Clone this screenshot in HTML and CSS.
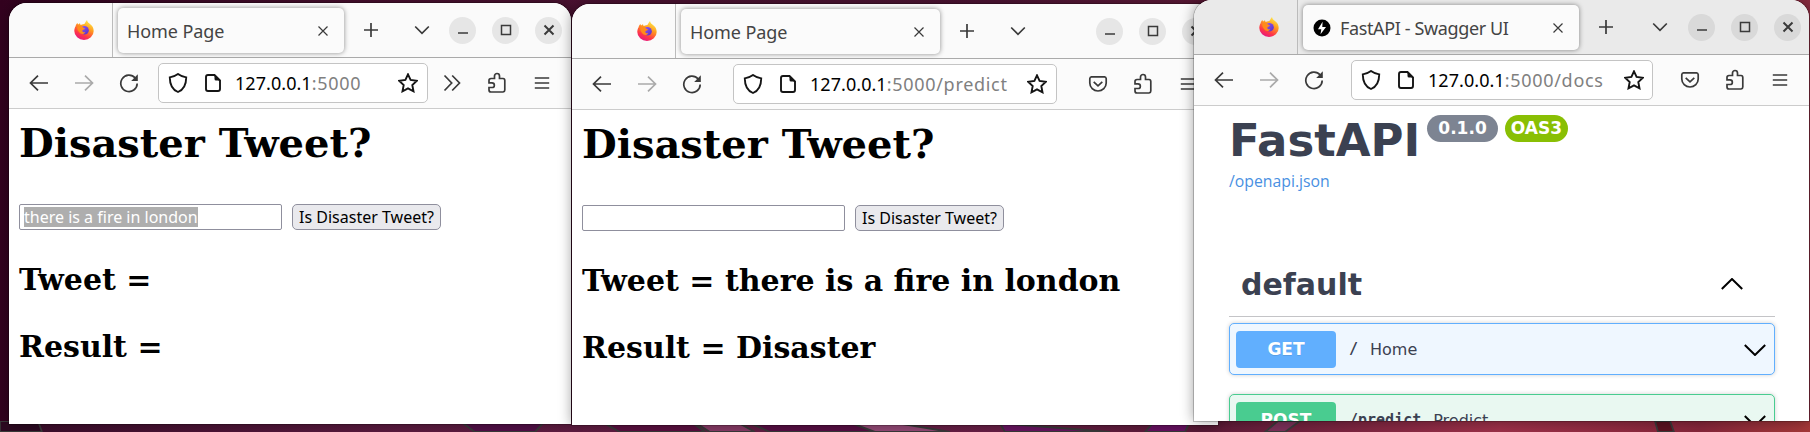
FILE: index.html
```html
<!DOCTYPE html>
<html lang="en">
<head>
<meta charset="utf-8">
<title>Desktop</title>
<link rel="stylesheet" href="styles.css">
</head>
<body>
<svg class="defs" width="0" height="0">
<defs>
<linearGradient id="fx1" x1=".8" y1="0" x2=".3" y2="1"><stop offset="0" stop-color="#fff44f"/><stop offset=".4" stop-color="#ff9a1f"/><stop offset=".75" stop-color="#ff3647"/><stop offset="1" stop-color="#e31587"/></linearGradient>
<linearGradient id="fx2" x1="0" y1="0" x2="1" y2="1"><stop offset="0" stop-color="#9059ff"/><stop offset="1" stop-color="#5b2fc0"/></linearGradient>
</defs>
<symbol id="firefox" viewBox="0 0 20 20"><path fill="url(#fx1)" d="M1.6 6.2C2 4.4 2.7 3.600 3.500 3C3.600 3.800 3.800 4.200 4.200 4.600C4.800 3.900 5.400 3.500 6 3.300C6 4 6.300 4.500 6.800 4.900C8.500 4.700 10 4.300 10.800 3.600C11.300 2.300 12 1.300 13 0C13.400 2.200 14.700 3 16 4C18.500 5.800 19.700 8 19.700 11A9.700 9 0 0 1 10 20A9.700 9 0 0 1 .3 11C.3 9 .8 7.500 1.600 6.200Z"/><circle cx="10.500" cy="10.200" r="4.300" fill="url(#fx2)"/><path fill="#ff8b1a" d="M3.200 6.500C5.500 5.500 8 6.200 9.400 7.700C10.400 8 11 8.200 11 8.800C10.500 9.700 8.900 9.600 8.300 10.400C8.200 12 9.600 12.500 11.300 12.200C10 14.500 7 14.500 5.500 12.500C4 11 3 9 3.200 6.500Z"/></symbol>
<symbol id="close" viewBox="0 0 12 12"><path d="M1.500 1.500L10.500 10.500M10.500 1.500L1.500 10.500"/></symbol>
<symbol id="plus" viewBox="0 0 16 16"><path d="M8 1V15M1 8H15"/></symbol>
<symbol id="down" viewBox="0 0 16 10"><path d="M1.200 1.500L8 8.300L14.800 1.500"/></symbol>
<symbol id="min" viewBox="0 0 12 12"><path d="M1 9H11"/></symbol>
<symbol id="max" viewBox="0 0 12 12"><path d="M1.500 1.500H10.500V10.500H1.500Z"/></symbol>
<symbol id="back" viewBox="0 0 20 20"><path d="M19 10H1.500M9 2.700L1.500 10L9 17.300"/></symbol>
<symbol id="fwd" viewBox="0 0 20 20"><path d="M1 10H18.500M11 2.700L18.500 10L11 17.300"/></symbol>
<symbol id="reload" viewBox="0 0 20 20"><path d="M18.200 10.500A8.200 8.200 0 1 1 16.200 5"/><path fill="currentColor" stroke="none" d="M18.800 1.300V8H12.200Z"/></symbol>
<symbol id="shield" viewBox="0 0 20 20"><path d="M10 1C12.500 2.800 15 3.900 18.200 4.400C18.200 11.500 16.500 16.200 10 19C3.500 16.200 1.800 11.500 1.800 4.400C5 3.900 7.500 2.800 10 1Z"/></symbol>
<symbol id="doc" viewBox="0 0 18 20"><path d="M4 2H10.500L16 7.500V16A2 2 0 0 1 14 18H4A2 2 0 0 1 2 16V4A2 2 0 0 1 4 2Z"/><path fill="currentColor" stroke="none" d="M10.500 1.500L16.500 7.500H12A1.500 1.500 0 0 1 10.500 6Z"/></symbol>
<symbol id="star" viewBox="0 0 20 20"><path d="M10 1.300L12.600 6.900L18.900 7.700L14.300 12L15.500 18.300L10 15.300L4.500 18.300L5.700 12L1.100 7.700L7.400 6.900Z"/></symbol>
<symbol id="more" viewBox="0 0 18 18"><path d="M1.500 1.500L8.700 9L1.500 16.500M9.200 1.500L16.500 9L9.200 16.500"/></symbol>
<symbol id="pocket" viewBox="0 0 20 20"><path d="M3.500 2.800H16.500A2 2 0 0 1 18.200 4.500V9A8.200 8 0 0 1 1.800 9V4.500A2 2 0 0 1 3.500 2.800Z"/><path d="M5.700 7.800L10 11.800L14.300 7.800"/></symbol>
<symbol id="puzzle" viewBox="0 0 20 22"><path d="M4 6.500H7.500V4A2.500 2.500 0 0 1 12.500 4V6.500H16A2 2 0 0 1 17.800 8.500V18A2 2 0 0 1 16 20H4A2 2 0 0 1 2 18V15.500H5A2 2 0 0 0 5 10.800H2V8.500A2 2 0 0 1 4 6.500Z"/></symbol>
<symbol id="menu" viewBox="0 0 16 14"><path d="M.8 2H15.200M.8 7H15.200M.8 12H15.200"/></symbol>
<symbol id="bolt" viewBox="0 0 18 18"><circle cx="9" cy="9" r="8.500" fill="#000" stroke="none"/><path fill="#fff" stroke="none" d="M9.600 2.800L5 10.200H8.300L7.500 15.200L13 7.900H9.300Z"/></symbol>
<symbol id="arrow" viewBox="0 0 22 12"><path d="M.8 1L11 11L21.200 1"/></symbol>
</svg>

<svg class="wallpaper" viewBox="0 0 1810 10" preserveAspectRatio="none">
<path fill="#2d0a22" d="M0 0H38L42 10H0Z"/>
<path fill="#521047" d="M460 0H545L535 10H475Z"/>
<path fill="#5c1040" d="M600 0H690L705 10H620Z"/><path fill="#8a3c68" d="M693 0H735L755 10H710Z"/><path fill="#590f45" d="M745 0H850L880 10H770Z"/><path fill="#974b78" d="M846 0H885L950 10H875Z"/><path fill="#6a1562" d="M1000 2L1110 10H1005Z"/><path fill="#691162" d="M1155 0H1190L1185 10H1145Z"/><path fill="#7a3058" d="M1278 0H1300L1285 10H1265Z"/><path fill="#5a1220" d="M1655 0H1670L1674 10H1658Z"/>
</svg>

<section class="window one">
<header class="tabs"><svg class="fx"><use href="#firefox"/></svg><div class="tab"><span class="title">Home Page</span><svg class="i12 end"><use href="#close"/></svg></div><svg class="i16 plus"><use href="#plus"/></svg><svg class="chev"><use href="#down"/></svg><div class="controls"><span><svg class="i12"><use href="#min"/></svg></span><span><svg class="i12"><use href="#max"/></svg></span><span><svg class="i12 x"><use href="#close"/></svg></span></div></header>
<nav class="toolbar"><span class="cell"><svg><use href="#back"/></svg></span><span class="cell dim"><svg><use href="#fwd"/></svg></span><span class="cell"><svg><use href="#reload"/></svg></span><div class="url"><svg><use href="#shield"/></svg><svg class="doc"><use href="#doc"/></svg><span class="addr"><b>127.0.0.1</b>:5000</span><svg class="end"><use href="#star"/></svg></div><div class="tools"><span class="cell"><svg class="more"><use href="#more"/></svg></span><span class="cell"><svg class="puzzle"><use href="#puzzle"/></svg></span><span class="cell"><svg class="menu"><use href="#menu"/></svg></span></div></nav>
<main class="page"><h1>Disaster Tweet?</h1><div class="form"><div class="input"><span class="selected">there is a fire in london</span></div><button>Is Disaster Tweet?</button></div><h2>Tweet =</h2><h2>Result =</h2></main>
</section>

<section class="window two">
<header class="tabs"><svg class="fx"><use href="#firefox"/></svg><div class="tab"><span class="title">Home Page</span><svg class="i12 end"><use href="#close"/></svg></div><svg class="i16 plus"><use href="#plus"/></svg><svg class="chev"><use href="#down"/></svg><div class="controls"><span><svg class="i12"><use href="#min"/></svg></span><span><svg class="i12"><use href="#max"/></svg></span><span><svg class="i12 x"><use href="#close"/></svg></span></div></header>
<nav class="toolbar"><span class="cell"><svg><use href="#back"/></svg></span><span class="cell dim"><svg><use href="#fwd"/></svg></span><span class="cell"><svg><use href="#reload"/></svg></span><div class="url"><svg><use href="#shield"/></svg><svg class="doc"><use href="#doc"/></svg><span class="addr"><b>127.0.0.1</b>:5000/predict</span><svg class="end"><use href="#star"/></svg></div><div class="tools"><span class="cell"><svg><use href="#pocket"/></svg></span><span class="cell"><svg class="puzzle"><use href="#puzzle"/></svg></span><span class="cell"><svg class="menu"><use href="#menu"/></svg></span></div></nav>
<main class="page"><h1>Disaster Tweet?</h1><div class="form"><div class="input"></div><button>Is Disaster Tweet?</button></div><h2>Tweet = there is a fire in london</h2><h2>Result = Disaster</h2></main>
</section>

<section class="window three">
<header class="tabs"><svg class="fx"><use href="#firefox"/></svg><div class="tab"><svg class="favicon"><use href="#bolt"/></svg><span class="title">FastAPI - Swagger UI</span><svg class="i12 end"><use href="#close"/></svg></div><svg class="i16 plus"><use href="#plus"/></svg><svg class="chev"><use href="#down"/></svg><div class="controls"><span><svg class="i12"><use href="#min"/></svg></span><span><svg class="i12"><use href="#max"/></svg></span><span><svg class="i12 x"><use href="#close"/></svg></span></div></header>
<nav class="toolbar"><span class="cell"><svg><use href="#back"/></svg></span><span class="cell dim"><svg><use href="#fwd"/></svg></span><span class="cell"><svg><use href="#reload"/></svg></span><div class="url"><svg><use href="#shield"/></svg><svg class="doc"><use href="#doc"/></svg><span class="addr"><b>127.0.0.1</b>:5000/docs</span><svg class="end"><use href="#star"/></svg></div><div class="tools"><span class="cell"><svg><use href="#pocket"/></svg></span><span class="cell"><svg class="puzzle"><use href="#puzzle"/></svg></span><span class="cell"><svg class="menu"><use href="#menu"/></svg></span></div></nav>
<main class="swagger">
<div class="brand"><span class="name">FastAPI</span><span class="badge">0.1.0</span><span class="badge oas">OAS3</span></div>
<div class="spec">/openapi.json</div>
<div class="group"><span>default</span><svg class="arrow up"><use href="#arrow"/></svg></div>
<div class="op get"><span class="method">GET</span><span class="path">/</span><span class="desc">Home</span><svg class="arrow"><use href="#arrow"/></svg></div>
<div class="op post"><span class="method">POST</span><span class="path">/predict</span><span class="desc">Predict</span><svg class="arrow"><use href="#arrow"/></svg></div>
</main>
</section>
</body>
</html>
```

FILE: styles.css
```css
* { box-sizing: border-box; }
body { margin: 0; width: 1810px; height: 432px; overflow: hidden; position: relative; background: linear-gradient(90deg, #33021f 0, #4a1030 350px, #4e1434 1000px, #7b2440 1500px, #8a2c40 1810px); font-family: "Noto Sans", sans-serif; }
.defs { position: absolute; }
.wallpaper { position: absolute; left: 0; bottom: 0; width: 1810px; height: 11px; background: linear-gradient(90deg, #3a0c2a 0, #5c1b40 400px, #6a2047 1000px, #5c1a38 1200px, #9c3048 1500px, #85263a 1700px, #a53838 1810px); }
svg { display: block; flex: none; fill: none; stroke: #3a3a3a; color: #3a3a3a; stroke-width: 1.7; }

/* windows */
.window { position: absolute; background: #fff; border-radius: 18px 18px 0 0; overflow: hidden; box-shadow: 0 0 0 1px rgba(0,0,0,.2), 0 0 14px rgba(0,0,0,.4); }
.one { left: 9px; top: 3px; width: 562px; height: 421px; }
.two { left: 572px; top: 4px; width: 646px; height: 421px; }
.three { left: 1194px; top: 0; width: 615px; height: 421px; }

/* tab strip */
.tabs { height: 55px; display: flex; align-items: center; background: #fafafa; border-bottom: 1px solid #aaa; }
.three .tabs { background: #eaeaea; }
.fx { width: 20px; height: 20px; margin-left: 65px; stroke: none; }
.tab { align-self: stretch; display: flex; align-items: center; margin: 5px 0 4px 24px; padding: 0 15px 0 9px; width: 226px; background: #fbfbfb; border-radius: 5px; box-shadow: 0 0 5px rgba(0,0,0,.45); position: relative; }
.tab::before { content: ""; position: absolute; left: -6px; top: -5px; bottom: -4px; width: 1px; background: #bbb; }
.title { font-size: 18px; line-height: 24px; padding-top: 1px; color: #444; letter-spacing: -.1px; white-space: nowrap; }
.three .title { letter-spacing: -.37px; }
.end { margin-left: auto; }
.i12 { width: 12px; height: 12px; stroke-width: 1.2; }
.i16 { width: 16px; height: 16px; }
.plus { margin-left: 19px; }
.chev { width: 16px; height: 10px; margin-left: 35px; }
.controls { display: flex; gap: 16px; margin-left: auto; margin-right: 9px; }
.controls span { width: 27px; height: 27px; border-radius: 50%; background: #e6e6e6; display: flex; align-items: center; justify-content: center; }
.controls .i12 { stroke-width: 1.500; }
.controls .x { stroke-width: 2; }
.three .controls span { background: #d9d9d9; }
.two .tab { width: 259px; }
.three .tab { width: 276px; padding-left: 10px; }
.three .chev { margin-left: 38px; }
.three .controls { margin-right: 8px; }
.favicon { width: 18px; height: 18px; margin-right: 9px; }

/* address bar */
.toolbar { height: 51px; display: flex; align-items: center; padding-left: 7px; background: #fbfbfb; border-bottom: 1px solid #ccc; }
.cell { width: 45px; display: flex; justify-content: center; align-items: center; }
.cell svg, .url svg { width: 20px; height: 20px; }
.dim svg { stroke: #aaa; }
.url { display: flex; align-items: center; height: 40px; width: 270px; margin-left: 7px; padding: 0 9px; border: 1px solid #c4c4c4; border-radius: 5px; background: #fff; }
.url svg { stroke: #151515; color: #151515; stroke-width: 1.900; }
.url .doc { width: 18px; margin: 0 13px 0 16px; }
.addr { font-size: 18px; color: #808080; white-space: nowrap; letter-spacing: .7px; }
.addr b { font-weight: 400; color: #000; letter-spacing: .05px; }
.tools { display: flex; margin-left: auto; margin-right: 7px; }
.cell .more { width: 18px; height: 18px; }
.cell .puzzle { width: 20px; height: 22px; }
.cell .menu { width: 16px; height: 14px; }
.two .url { width: 324px; margin-left: 19px; }
.two .tools { margin-right: 8px; }
.three .url { width: 302px; margin-left: 15px; padding-right: 8px; }

/* tweet form */
.page { padding: 10px; color: #000; }
h1, h2 { font-family: "DejaVu Serif", serif; font-weight: 700; margin: 0; white-space: nowrap; }
h1 { font-size: 40px; line-height: 48px; }
.form { display: flex; gap: 10px; margin-top: 37px; height: 26px; }
.input { width: 263px; border: 1px solid #8f8f9d; border-radius: 2px; padding: 2px 4px; background: #fff; }
.selected { display: block; width: 174px; height: 20px; line-height: 20px; background: #aeaeae; color: #fff; font-size: 16px; white-space: nowrap; }
button { width: 149px; height: 26px; padding: 0; border: 1px solid #8f8f9d; border-radius: 5px; background: #e9e9ed; color: #000; font: 16px/24px "Noto Sans", sans-serif; white-space: nowrap; }
h2 { font-size: 30px; line-height: 36px; margin-top: 31px; }
.form + h2 { margin-top: 32px; }

/* API docs */
.swagger { padding: 0 34px 0 35px; font-family: "DejaVu Sans", sans-serif; color: #3b4151; }
.brand { display: flex; height: 60px; }
.name { font-size: 45px; font-weight: 700; line-height: 69px; white-space: nowrap; }
.badge { height: 27px; margin: 9px 0 0 7px; padding: 0 11px; border-radius: 14px; background: #7d8492; color: #fff; font-size: 17px; font-weight: 700; line-height: 26px; }
.oas { background: #89bf04; margin-left: 7px; padding: 0 6px; }
.spec { color: #4990e2; font: 15.8px/20px "Open Sans", sans-serif; margin-top: 5px; }
.group { display: flex; align-items: center; justify-content: space-between; height: 64px; margin-top: 62px; padding: 0 32px 0 12px; border-bottom: 1px solid #c4c4c7; font-size: 30px; font-weight: 700; }
.arrow { width: 22px; height: 12px; stroke: #000; stroke-width: 2; }
.up { transform: scaleY(-1); margin-bottom: 2px; }
.op { display: flex; align-items: center; height: 52px; border: 1px solid #61affe; border-radius: 5px; background: #eff7ff; padding: 0 8px 0 6px; margin-top: 6px; box-shadow: 0 0 4px rgba(0,0,0,.19); }
.op .arrow { margin-left: auto; margin-top: 1px; }
.method { width: 100px; height: 37px; border-radius: 4px; background: #61affe; color: #fff; font-size: 17px; font-weight: 700; line-height: 36px; text-align: center; text-shadow: 0 1px 0 rgba(0,0,0,.1); }
.path { font: 700 15px "DejaVu Sans Mono", monospace; margin-left: 13px; }
.desc { font-size: 16px; margin-left: 12px; }
.post { margin-top: 19px; border-color: #49cc90; background: #e9f8f1; }
.post .method { background: #49cc90; }
```
